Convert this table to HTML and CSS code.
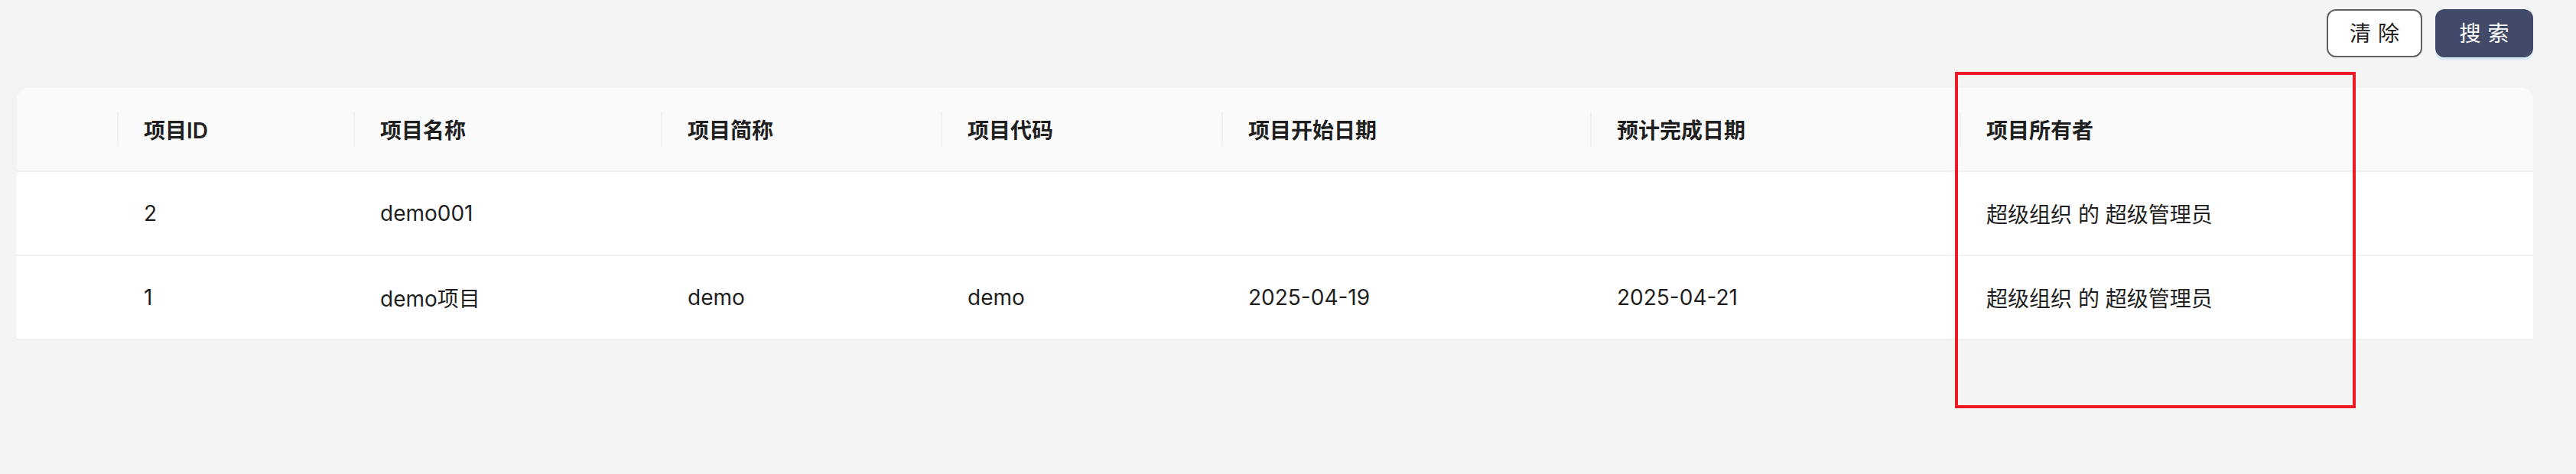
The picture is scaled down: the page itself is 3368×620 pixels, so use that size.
FILE: index.html
```html
<!DOCTYPE html>
<html lang="zh-CN">
<head>
<meta charset="utf-8">
<title>项目列表</title>
<link rel="stylesheet" href="styles.css">
</head>
<body>
<div class="page">
  <div class="toolbar">
    <button class="btn btn-clear">清 除</button>
    <button class="btn btn-search">搜 索</button>
  </div>
  <div class="table-wrap">
    <table class="grid">
      <colgroup>
        <col class="c0"><col class="c1"><col class="c2"><col class="c3"><col class="c4"><col class="c5"><col class="c6"><col class="c7">
      </colgroup>
      <thead>
        <tr>
          <th class="first"></th>
          <th>项目ID</th>
          <th>项目名称</th>
          <th>项目简称</th>
          <th>项目代码</th>
          <th>项目开始日期</th>
          <th>预计完成日期</th>
          <th class="last">项目所有者</th>
        </tr>
      </thead>
      <tbody>
        <tr>
          <td></td>
          <td>2</td>
          <td>demo001</td>
          <td></td>
          <td></td>
          <td></td>
          <td></td>
          <td>超级组织 的 超级管理员</td>
        </tr>
        <tr>
          <td></td>
          <td>1</td>
          <td>demo项目</td>
          <td>demo</td>
          <td>demo</td>
          <td>2025-04-19</td>
          <td>2025-04-21</td>
          <td>超级组织 的 超级管理员</td>
        </tr>
      </tbody>
    </table>
  </div>
</div>
<div class="highlight"></div>
</body>
</html>
```
FILE: styles.css
```css
html, body {
  margin: 0;
  padding: 0;
  background: #f4f4f4;
  font-family: Inter, "Noto Sans CJK SC", sans-serif;
  color: #1f1f1f;
}

.page {
  padding: 12px 56px 0 22px;
}

.toolbar {
  display: flex;
  justify-content: flex-end;
  gap: 17px;
  height: 63px;
}

.btn {
  box-sizing: border-box;
  height: 63px;
  border-radius: 12px;
  font-family: Inter, "Noto Sans CJK SC", sans-serif;
  font-size: 28px;
  line-height: 1;
  display: flex;
  align-items: center;
  justify-content: center;
  padding: 0;
  cursor: pointer;
  word-spacing: 1px;
}

.btn-clear {
  width: 125px;
  background: #ffffff;
  border: 2px solid #606064;
  color: #1f1f1f;
}

.btn-search {
  width: 128px;
  background: #424a69;
  border: 2px solid #424a69;
  color: #ffffff;
  box-shadow: 0 4px 0 rgba(5, 145, 255, 0.1);
}

.table-wrap {
  margin-top: 40px;
  background: #ffffff;
  border-radius: 16px 16px 0 0;
}

.grid {
  width: 3290px;
  table-layout: fixed;
  border-collapse: separate;
  border-spacing: 0;
  font-size: 28px;
}

.c0 { width: 133px; }
.c1 { width: 309px; }
.c2 { width: 402px; }
.c3 { width: 366px; }
.c4 { width: 367px; }
.c5 { width: 482px; }
.c6 { width: 483px; }
.c7 { width: 748px; }

.grid th,
.grid td {
  text-align: left;
  vertical-align: middle;
  padding: 0 30px 0 33px;
  border-bottom: 2px solid #f0f0f0;
  white-space: nowrap;
  overflow: hidden;
}

.grid th {
  position: relative;
  height: 108px;
  background: #fafafa;
  font-weight: 600;
  color: #1f1f1f;
}

.grid th.first { border-top-left-radius: 16px; }
.grid th.last { border-top-right-radius: 16px; }

.grid th:not(.last)::before {
  content: "";
  position: absolute;
  right: 0;
  top: 50%;
  width: 2px;
  height: 45px;
  transform: translateY(-50%);
  background: #f0f0f0;
}

.grid td {
  height: 108px;
  background: #ffffff;
  font-weight: 400;
  color: #1f1f1f;
}

.highlight {
  position: absolute;
  left: 2556px;
  top: 94px;
  width: 524px;
  height: 440px;
  box-sizing: border-box;
  border: 4px solid #ed1c24;
  pointer-events: none;
}
```
